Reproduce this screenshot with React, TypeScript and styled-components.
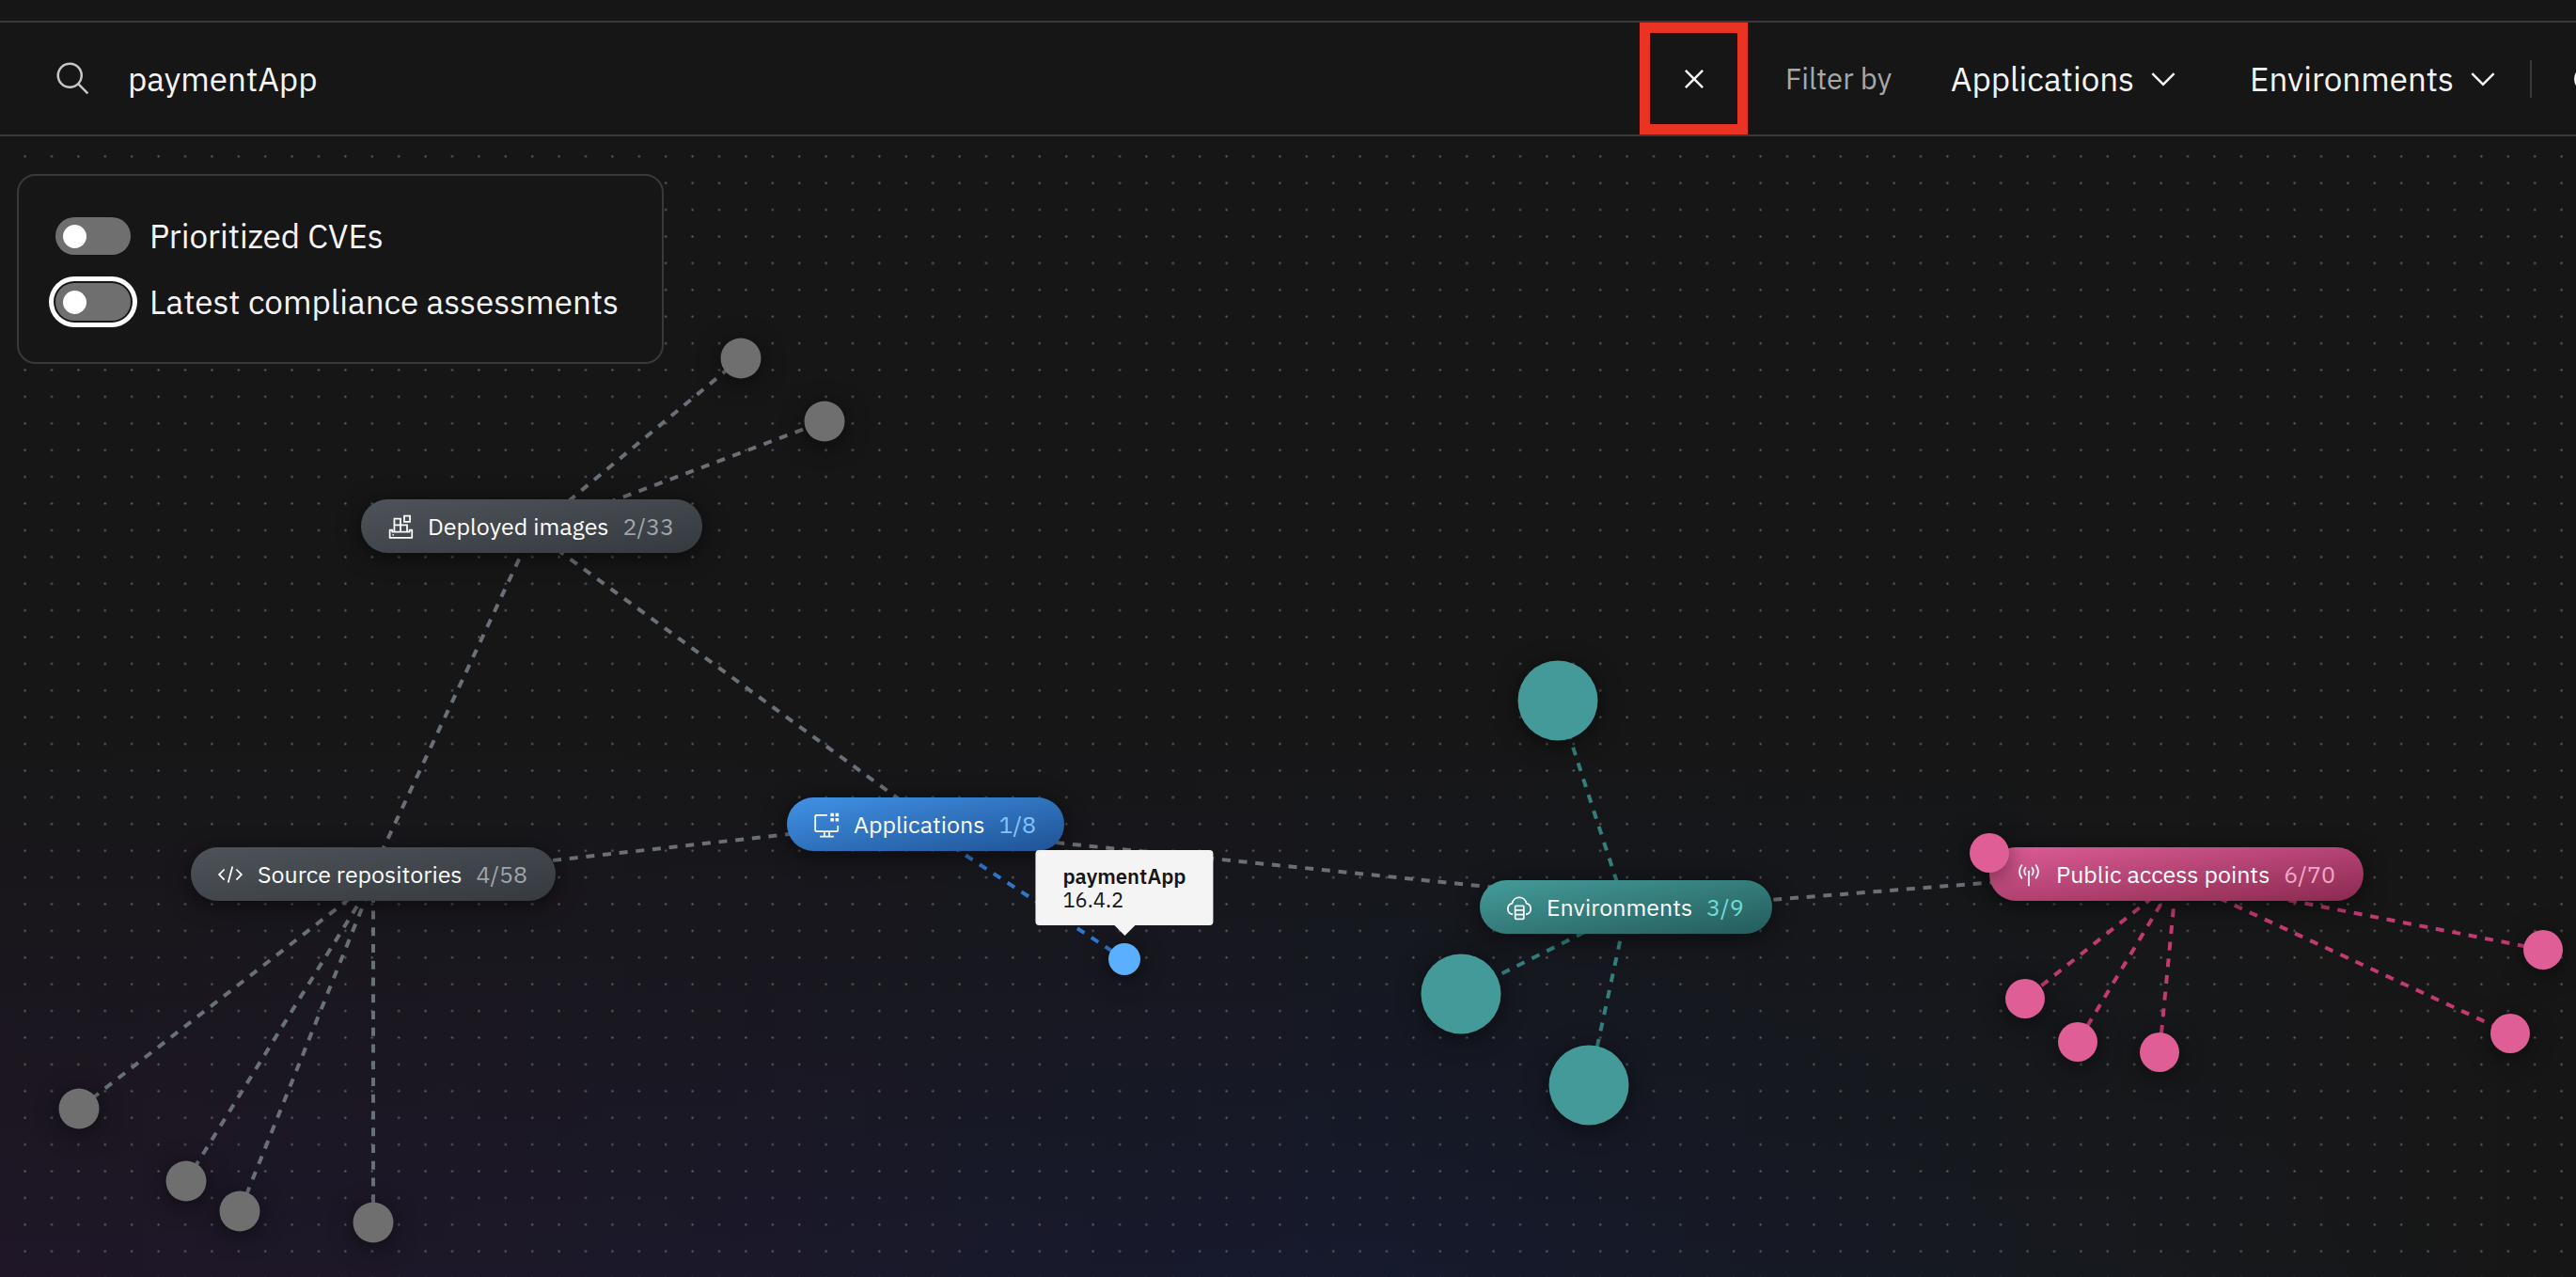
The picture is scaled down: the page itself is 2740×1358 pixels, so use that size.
import React from "react";
import styled, { createGlobalStyle } from "styled-components";

const GlobalStyle = createGlobalStyle`
  *, *::before, *::after { box-sizing: border-box; }
  body {
    margin: 0;
    background: #161616;
    color: #f4f4f4;
    font-family: "IBM Plex Sans", "Noto Sans", "Open Sans", sans-serif;
  }
  button, input, select { font: inherit; color: inherit; }
`;

type Tone = "gray" | "blue" | "teal" | "pink";

const tones: Record<Tone, { from: string; to: string; count: string; dot: string; link: string }> = {
  gray: { from: "#4d5358", to: "#343a3f", count: "#a0a5aa", dot: "#6f6f6f", link: "#697077" },
  blue: { from: "#4192e6", to: "#1f5294", count: "#82c4ff", dot: "#5aafff", link: "#2f78c8" },
  teal: { from: "#449c9a", to: "#245b5b", count: "#6fdcd8", dot: "#449a99", link: "#347f7d" },
  pink: { from: "#dd5d95", to: "#8a2950", count: "#f3a6c6", dot: "#de5e95", link: "#c23a72" },
};

/* ---------- layout ---------- */

const Page = styled.div`
  display: flex;
  flex-direction: column;
  min-height: 100vh;
  padding-top: 22px;
  overflow: hidden;
`;

const Toolbar = styled.header`
  display: flex;
  align-items: center;
  height: 123px;
  border-top: 2px solid #393939;
  border-bottom: 2px solid #393939;
  overflow: hidden;
`;

const SearchField = styled.label`
  display: flex;
  flex: 1;
  align-items: center;
  gap: 38px;
  padding-left: 58px;
  color: #c6c6c6;
`;

const SearchInput = styled.input`
  flex: 1;
  min-width: 0;
  padding: 0;
  border: 0;
  outline: 0;
  background: transparent;
  color: #f4f4f4;
  font-size: 35px;
  line-height: 48px;
`;

const ClearButton = styled.button`
  display: flex;
  align-items: center;
  justify-content: center;
  align-self: stretch;
  width: 115px;
  padding: 0;
  border: 11px solid #ea3323;
  background: transparent;
`;

const FilterGroup = styled.div`
  display: flex;
  align-items: center;
  padding-left: 40px;
`;

const FilterLabel = styled.span`
  width: 176px;
  color: #a8a8a8;
  font-size: 31px;
  line-height: 48px;
`;

const SelectWrap = styled.label`
  display: flex;
  align-items: center;
  margin-right: 72px;

  &:last-of-type {
    margin-right: 30px;
  }
`;

const Select = styled.select`
  margin-right: -40px;
  padding: 0 50px 0 0;
  border: 0;
  outline: 0;
  appearance: none;
  background: transparent;
  font-size: 35px;
  line-height: 48px;
`;

const Divider = styled.span`
  width: 2px;
  height: 40px;
  margin-right: 45px;
  background: #393939;
`;

const MoreButton = styled.button`
  display: flex;
  flex: none;
  width: 40px;
  margin-right: -38px;
  padding: 0;
  border: 0;
  background: transparent;
`;

const Icon = styled.svg<{ $size: number }>`
  flex: none;
  width: ${(p) => p.$size}px;
  height: ${(p) => p.$size}px;
  fill: currentColor;
  pointer-events: none;
`;

const LineIcon = styled(Icon)`
  fill: none;
  stroke: currentColor;
  stroke-width: 2;
`;

const Canvas = styled.main`
  position: relative;
  flex: 1;
  display: flex;
  align-items: flex-start;
  padding: 40px 18px;
  overflow: hidden;
  background:
    linear-gradient(to bottom, #161616 0%, #161616 50%, rgba(22, 22, 22, 0) 100%),
    linear-gradient(to right, #1f1627 0%, #1c1829 22%, #151a2d 54%, #16191e 82%, #161616 100%);
`;

const Scene = styled.svg`
  position: absolute;
  inset: 0;
  width: 100%;
  height: 100%;
`;

const OptionsPanel = styled.section`
  position: relative;
  display: flex;
  flex-direction: column;
  gap: 30px;
  padding: 44px 46px 44px 39px;
  border: 2px solid #393939;
  border-radius: 20px;
  background: #161616;
`;

const ToggleRow = styled.label`
  display: flex;
  align-items: center;
  gap: 20px;
  font-size: 35px;
  line-height: 40px;
`;

const Toggle = styled.input<{ $focused?: boolean }>`
  flex: none;
  display: flex;
  align-items: center;
  width: 80px;
  height: 40px;
  margin: 0;
  padding: 0 8px;
  appearance: none;
  border-radius: 20px;
  background: #6f6f6f;
  box-shadow: ${(p) => (p.$focused ? "0 0 0 2px #161616, 0 0 0 7px #ffffff" : "none")};

  &::before {
    content: "";
    width: 25px;
    height: 25px;
    border-radius: 50%;
    background: #ffffff;
  }

  &:checked {
    justify-content: flex-end;
    background: #42be65;
  }
`;

const Pill = styled.button<{ $tone: Tone; $x: number; $y: number }>`
  position: absolute;
  left: ${(p) => p.$x}px;
  top: ${(p) => p.$y}px;
  display: flex;
  align-items: center;
  gap: 15px;
  height: 57px;
  padding: 0 30px 0 28px;
  border: 0;
  border-radius: 29px;
  background: linear-gradient(to bottom right, ${(p) => tones[p.$tone].from}, ${(p) => tones[p.$tone].to});
  box-shadow: 0 4px 24px rgba(0, 0, 0, 0.55);
  color: #ffffff;
  font-size: 25px;
  line-height: 32px;
  white-space: nowrap;
`;

const Count = styled.span<{ $tone: Tone }>`
  color: ${(p) => tones[p.$tone].count};
`;

const Dot = styled.button<{ $tone: Tone; $x: number; $y: number; $size: number }>`
  position: absolute;
  left: ${(p) => p.$x}px;
  top: ${(p) => p.$y}px;
  width: ${(p) => p.$size}px;
  height: ${(p) => p.$size}px;
  padding: 0;
  border: 0;
  border-radius: 50%;
  background: ${(p) => tones[p.$tone].dot};
  box-shadow: 0 4px 24px rgba(0, 0, 0, 0.5);
  transform: translate(-50%, -50%);
`;

const Tooltip = styled.div`
  position: absolute;
  left: 1196px;
  top: 759px;
  padding: 15px 29px;
  border-radius: 4px;
  background: #f4f4f4;
  color: #161616;
  font-size: 22px;
  line-height: 25px;
  transform: translateX(-50%);

  &::after {
    content: "";
    position: absolute;
    left: 50%;
    top: 100%;
    border: 11px solid transparent;
    border-top-color: #f4f4f4;
    border-bottom: 0;
    transform: translateX(-50%);
  }
`;

const TooltipTitle = styled.strong`
  display: block;
  font-weight: 600;
`;

/* ---------- icons ---------- */

const SearchIcon = () => (
  <Icon $size={40} viewBox="0 0 32 32" aria-hidden="true">
    <path d="M29,27.5859l-7.5521-7.5521a11.0177,11.0177,0,1,0-1.4141,1.4141L27.5859,29ZM4,13a9,9,0,1,1,9,9A9.01,9.01,0,0,1,4,13Z" />
  </Icon>
);

const CloseIcon = () => (
  <Icon $size={40} viewBox="0 0 32 32" aria-hidden="true">
    <path d="M17.4141 16L24 9.4141 22.5859 8 16 14.5859 9.4143 8 8 9.4141 14.5859 16 8 22.5859 9.4143 24 16 17.4141 22.5859 24 24 22.5859z" />
  </Icon>
);

const ChevronIcon = () => (
  <Icon $size={40} viewBox="0 0 32 32" aria-hidden="true">
    <path d="M16 22L6 12l1.4-1.4 8.6 8.6 8.6-8.6L26 12z" />
  </Icon>
);

const ImagesIcon = () => (
  <LineIcon $size={28} viewBox="0 0 32 32" aria-hidden="true">
    <path d="M6 20H3v9.500h27V20h-3v2.500H6z" strokeLinejoin="round" />
    <path d="M8.500 6.500h7.500v7.500H8.500zM8.500 14h7.500v8.500M16 14h8v8.500M20.500 3h7v7h-7z" />
    <path d="M8.500 14v8.500" />
    <circle cx="7" cy="26" r="1" fill="currentColor" stroke="none" />
  </LineIcon>
);

const CodeIcon = () => (
  <Icon $size={28} viewBox="0 0 32 32" aria-hidden="true">
    <path d="M31 16L24 23 22.590 21.590 28.170 16 22.590 10.410 24 9zM1 16L8 9 9.410 10.410 3.830 16 9.410 21.590 8 23zM12.420 25.480L17.640 6 19.570 6.520 14.350 26z" />
  </Icon>
);

const DesktopIcon = () => (
  <LineIcon $size={28} viewBox="0 0 32 32" aria-hidden="true">
    <path d="M17 4.500H4a1.500 1.500 0 0 0-1.500 1.500v16.500A1.500 1.500 0 0 0 4 24h24.500a1.500 1.500 0 0 0 1.500-1.500V17M8 30.500h17M13.500 24v6.500M19.500 24v6.500" />
    <path d="M21 2h4v4h-4zM27 2h4v4h-4zM21 8h4v4h-4zM27 8h4v4h-4z" fill="currentColor" stroke="none" />
  </LineIcon>
);

const CloudIcon = () => (
  <LineIcon $size={28} viewBox="0 0 32 32" aria-hidden="true">
    <path d="M8 24.500A6.900 6.900 0 0 1 7.300 11 8.900 8.900 0 0 1 24.700 11 6.900 6.900 0 0 1 24 24.500" />
    <rect x="11" y="14" width="10.500" height="16" rx="1" />
    <path d="M11 19.300h10.500M11 24.700h10.500" />
  </LineIcon>
);

const AntennaIcon = () => (
  <LineIcon $size={28} viewBox="0 0 32 32" aria-hidden="true">
    <path d="M16 12v18M12.500 7q-4 5 0 10M19.500 7q4 5 0 10M7.800 4q-6.500 8.500 0 17M24.200 4q6.500 8.500 0 17" />
    <circle cx="16" cy="12.500" r="1.500" fill="currentColor" stroke="none" />
  </LineIcon>
);

/* ---------- graph data, in canvas coordinates ---------- */

const hubs = [
  { label: "Deployed images", count: "2/33", tone: "gray" as Tone, x: 384, y: 386, icon: <ImagesIcon /> },
  { label: "Source repositories", count: "4/58", tone: "gray" as Tone, x: 203, y: 756, icon: <CodeIcon /> },
  { label: "Applications", count: "1/8", tone: "blue" as Tone, x: 837, y: 703, icon: <DesktopIcon /> },
  { label: "Environments", count: "3/9", tone: "teal" as Tone, x: 1574, y: 791, icon: <CloudIcon /> },
  { label: "Public access points", count: "6/70", tone: "pink" as Tone, x: 2116, y: 756, icon: <AntennaIcon /> },
];

const anchors = {
  images: [566, 420],
  source: [397, 791],
  apps: [985, 737],
  env: [1730, 824],
  access: [2315, 789],
};

/* a link that arrives at a hub ends this far above the hub's own anchor */
const TARGET_RISE = 11;

type Leaf = { x: number; y: number; size: number; tone: Tone; hub: keyof typeof anchors };

const leaves: Leaf[] = [
  { x: 788, y: 236, size: 43, tone: "gray", hub: "images" },
  { x: 877, y: 303, size: 43, tone: "gray", hub: "images" },
  { x: 84, y: 1034, size: 43, tone: "gray", hub: "source" },
  { x: 198, y: 1111, size: 43, tone: "gray", hub: "source" },
  { x: 255, y: 1143, size: 43, tone: "gray", hub: "source" },
  { x: 397, y: 1155, size: 43, tone: "gray", hub: "source" },
  { x: 1196, y: 875, size: 34, tone: "blue", hub: "apps" },
  { x: 1657, y: 600, size: 85, tone: "teal", hub: "env" },
  { x: 1554, y: 912, size: 85, tone: "teal", hub: "env" },
  { x: 1690, y: 1009, size: 85, tone: "teal", hub: "env" },
  { x: 2116, y: 762, size: 42, tone: "pink", hub: "access" },
  { x: 2154, y: 917, size: 42, tone: "pink", hub: "access" },
  { x: 2210, y: 963, size: 42, tone: "pink", hub: "access" },
  { x: 2297, y: 974, size: 42, tone: "pink", hub: "access" },
  { x: 2670, y: 954, size: 42, tone: "pink", hub: "access" },
  { x: 2705, y: 865, size: 42, tone: "pink", hub: "access" },
];

const hubLinks: [keyof typeof anchors, keyof typeof anchors][] = [
  ["images", "source"],
  ["images", "apps"],
  ["source", "apps"],
  ["apps", "env"],
  ["env", "access"],
];

export default function App() {
  return (
    <>
      <GlobalStyle />
      <Page>
        <Toolbar>
          <SearchField>
            <SearchIcon />
            <SearchInput type="text" aria-label="Search" defaultValue="paymentApp" />
          </SearchField>
          <ClearButton type="button" aria-label="Clear search">
            <CloseIcon />
          </ClearButton>
          <FilterGroup>
            <FilterLabel>Filter by</FilterLabel>
            <SelectWrap>
              <Select aria-label="Applications filter">
                <option>Applications</option>
              </Select>
              <ChevronIcon />
            </SelectWrap>
            <SelectWrap>
              <Select aria-label="Environments filter">
                <option>Environments</option>
              </Select>
              <ChevronIcon />
            </SelectWrap>
            <Divider />
            <MoreButton type="button" aria-label="More">
              <LineIcon $size={40} viewBox="0 0 32 32" aria-hidden="true">
                <circle cx="11" cy="16" r="10" />
              </LineIcon>
            </MoreButton>
          </FilterGroup>
        </Toolbar>

        <Canvas>
          <Scene aria-hidden="true">
            <defs>
              <pattern id="grid" x="12.4" y="7.1" width="28.4" height="28.4" patternUnits="userSpaceOnUse">
                <circle cx="14.2" cy="14.2" r="1.200" fill="#5c5c5c" />
              </pattern>
            </defs>
            <rect x="13" y="8" width="100%" height="100%" fill="url(#grid)" />
            <g strokeWidth="4" strokeDasharray="9 8.750" strokeDashoffset="3">
              {hubLinks.map(([a, b]) => (
                <line
                  key={a + b}
                  x1={anchors[a][0]}
                  y1={anchors[a][1]}
                  x2={anchors[b][0]}
                  y2={anchors[b][1] - TARGET_RISE}
                  stroke={tones.gray.link}
                />
              ))}
              {leaves.map((l) => (
                <line
                  key={`${l.x}-${l.y}`}
                  x1={anchors[l.hub][0]}
                  y1={anchors[l.hub][1]}
                  x2={l.x}
                  y2={l.y}
                  stroke={tones[l.tone].link}
                />
              ))}
            </g>
          </Scene>

          {hubs.map((h) => (
            <Pill key={h.label} type="button" $tone={h.tone} $x={h.x} $y={h.y}>
              {h.icon}
              <span>{h.label}</span>
              <Count $tone={h.tone}>{h.count}</Count>
            </Pill>
          ))}

          {leaves.map((l) => (
            <Dot
              key={`${l.x}-${l.y}`}
              type="button"
              aria-label={`${l.hub} item`}
              $tone={l.tone}
              $x={l.x}
              $y={l.y}
              $size={l.size}
            />
          ))}

          <Tooltip role="tooltip">
            <TooltipTitle>paymentApp</TooltipTitle>
            16.4.2
          </Tooltip>

          <OptionsPanel>
            <ToggleRow>
              <Toggle type="checkbox" role="switch" />
              Prioritized CVEs
            </ToggleRow>
            <ToggleRow>
              <Toggle type="checkbox" role="switch" $focused />
              Latest compliance assessments
            </ToggleRow>
          </OptionsPanel>
        </Canvas>
      </Page>
    </>
  );
}
